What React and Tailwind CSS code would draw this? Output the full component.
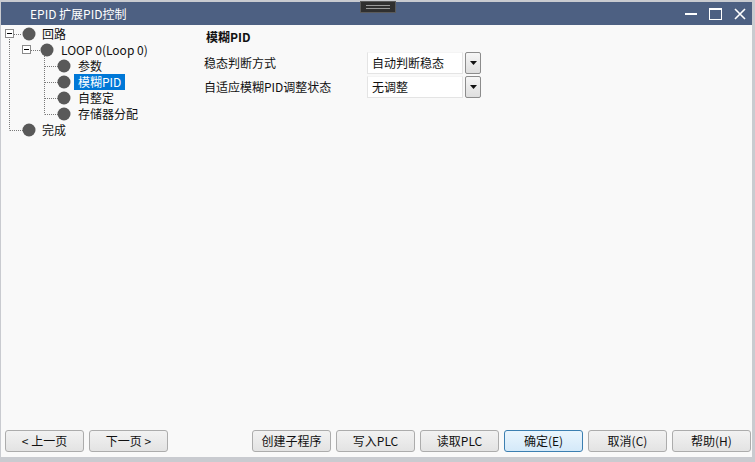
import React from 'react'

const font = { fontFamily: '"Noto Sans CJK SC", "Noto Sans", sans-serif' }

function Ball({ cx }) {
  return <circle cx={cx} cy={8} r={6.5} fill="#595959" />
}

function Box({ x }) {
  return (
    <g>
      <rect x={x + 0.5} y={3.5} width={8} height={8} fill="#fff" stroke="#8a8a8a" />
      <line x1={x + 2} y1={7.5} x2={x + 7} y2={7.5} stroke="#000" />
    </g>
  )
}

function Dots({ x1, y1, x2, y2 }) {
  return <line x1={x1} y1={y1} x2={x2} y2={y2} stroke="#7a7a7a" strokeDasharray="1 1" />
}

// svg coordinates: page x - 1
function TreeRow({ width, children, label, selected }) {
  return (
    <div className="flex items-center h-4">
      <svg width={width} height={16} className="shrink-0">{children}</svg>
      <span
        className={`px-[4px] leading-[16px] text-[12px] whitespace-nowrap ${selected ? 'bg-[#0078d7] text-white' : 'text-[#111]'}`}
      >
        {label}
      </span>
    </div>
  )
}

function Tree() {
  return (
    <div className="w-[203px] shrink-0 pt-[1px]">
      <TreeRow width={37} label="回路">
        <Box x={4} />
        <Dots x1={13} y1={8.5} x2={21} y2={8.5} />
        <Dots x1={8.5} y1={13} x2={8.5} y2={16} />
        <Ball cx={28} />
      </TreeRow>
      <TreeRow width={56} label="LOOP 0(Loop 0)">
        <Dots x1={8.5} y1={0} x2={8.5} y2={16} />
        <Box x={21} />
        <Dots x1={30} y1={8.5} x2={39} y2={8.5} />
        <Ball cx={46} />
        <Dots x1={43.5} y1={14} x2={43.5} y2={16} />
      </TreeRow>
      {['参数', '模糊PID', '自整定', '存储器分配'].map((t, i) => (
        <TreeRow key={t} width={73} label={t} selected={t === '模糊PID'}>
          <Dots x1={8.5} y1={0} x2={8.5} y2={16} />
          <Dots x1={43.5} y1={0} x2={43.5} y2={i === 3 ? 8.5 : 16} />
          <Dots x1={44} y1={8.5} x2={57} y2={8.5} />
          <Ball cx={63} />
        </TreeRow>
      ))}
      <TreeRow width={37} label="完成">
        <Dots x1={8.5} y1={0} x2={8.5} y2={8.5} />
        <Dots x1={9} y1={8.5} x2={22} y2={8.5} />
        <Ball cx={28} />
      </TreeRow>
    </div>
  )
}

function Select({ value }) {
  return (
    <div className="flex items-stretch gap-[2px] h-[22px]">
      <div className="w-[96px] bg-white border border-[#e4e4e4] border-t-[#f4f4f4] pl-[4px] flex items-center text-[12px] text-[#111]">
        {value}
      </div>
      <div className="w-[16px] rounded-[2px] border border-[#8c8c8c] bg-gradient-to-b from-[#f6f6f6] to-[#dedede] flex items-center justify-center">
        <svg width="7" height="4" viewBox="0 0 7 4">
          <path d="M0 0h7L3.5 4z" fill="#111" />
        </svg>
      </div>
    </div>
  )
}

function Btn({ children, primary, className = '' }) {
  return (
    <button
      className={`h-[22px] w-[79px] rounded-[3px] border text-[12px] text-[#111] flex items-center justify-center ${
        primary
          ? 'border-[#3c7fb1] bg-gradient-to-b from-[#eaf5fd] to-[#d4e9f9]'
          : 'border-[#acacac] bg-gradient-to-b from-[#f2f2f2] to-[#e3e3e3]'
      } ${className}`}
    >
      {children}
    </button>
  )
}

export default function App() {
  return (
    <div
      className="w-[755px] h-[462px] overflow-hidden bg-[#c9cbd0] pt-[2px] pl-[1px] pr-[3px] pb-[5px] flex"
      style={font}
    >
      <div className="flex-1 flex flex-col bg-[#f9f9f9] relative">
        {/* title bar */}
        <div className="h-[23px] bg-[#4d6082] flex items-center text-white shrink-0">
          <span className="ml-[29px] text-[12px]">EPID 扩展PID控制</span>
          <div className="ml-auto flex items-center gap-[12px] mr-[6px]">
            <svg width="12" height="12" viewBox="0 0 12 12">
              <rect x="0" y="5" width="12" height="2" fill="#fff" />
            </svg>
            <svg width="13" height="12" viewBox="0 0 13 12">
              <rect x="0.5" y="0.5" width="12" height="11" fill="none" stroke="#fff" />
              <rect x="0" y="0" width="13" height="2" fill="#fff" />
            </svg>
            <svg width="12" height="12" viewBox="0 0 12 12">
              <path d="M1 1L11 11M11 1L1 11" stroke="#fff" strokeWidth="1.6" />
            </svg>
          </div>
        </div>
        {/* grip handle */}
        <div className="absolute left-[359px] top-[-1px] w-[36px] h-[12px] bg-[#2f2f2f] border border-[#5a5a5a] flex flex-col items-center justify-center gap-[2px]">
          <div className="w-[24px] h-[1px] bg-[#9a9a9a]" />
          <div className="w-[24px] h-[1px] bg-[#9a9a9a]" />
        </div>

        {/* body */}
        <div className="flex-1 flex">
          <Tree />
          <div className="flex flex-col pt-[4px]">
            <div className="text-[12px] font-bold text-[#111] ml-[2px] h-[16px] leading-[16px]">模糊PID</div>
            <div className="mt-[7px] flex items-center">
              <span className="w-[163px] text-[12px] text-[#111]">稳态判断方式</span>
              <Select value="自动判断稳态" />
            </div>
            <div className="mt-[2px] flex items-center">
              <span className="w-[163px] text-[12px] text-[#111]">自适应模糊PID调整状态</span>
              <Select value="无调整" />
            </div>
          </div>
        </div>

        {/* footer buttons */}
        <div className="flex items-center pl-[4px] pr-[1px] pb-[5px] shrink-0">
          <Btn>&lt; 上一页</Btn>
          <Btn className="ml-[5px]">下一页 &gt;</Btn>
          <div className="ml-auto flex gap-[5px]">
            <Btn>创建子程序</Btn>
            <Btn>写入PLC</Btn>
            <Btn>读取PLC</Btn>
            <Btn primary>确定(E)</Btn>
            <Btn>取消(C)</Btn>
            <Btn>帮助(H)</Btn>
          </div>
        </div>
      </div>
    </div>
  )
}
